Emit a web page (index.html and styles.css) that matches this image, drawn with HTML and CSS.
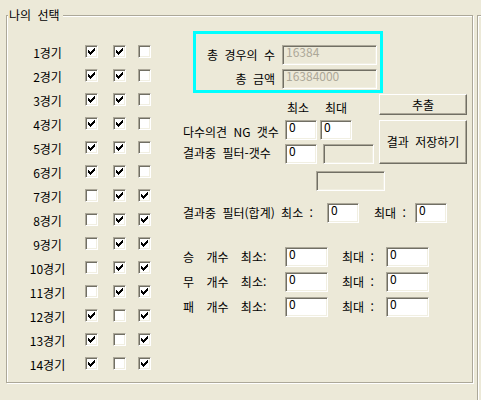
FILE: index.html
```html
<!DOCTYPE html>
<html lang="ko">
<head>
<meta charset="utf-8">
<title>나의 선택</title>
<link rel="stylesheet" href="styles.css">
</head>
<body>
<div class="page">
  <div class="group main">
    <span class="legend">나의 선택</span>
    <div class="games">
      <div class="row"><span class="lbl">1경기</span><span class="cb on"></span><span class="cb on"></span><span class="cb"></span></div>
      <div class="row"><span class="lbl">2경기</span><span class="cb on"></span><span class="cb on"></span><span class="cb"></span></div>
      <div class="row"><span class="lbl">3경기</span><span class="cb on"></span><span class="cb on"></span><span class="cb"></span></div>
      <div class="row"><span class="lbl">4경기</span><span class="cb on"></span><span class="cb on"></span><span class="cb"></span></div>
      <div class="row"><span class="lbl">5경기</span><span class="cb on"></span><span class="cb on"></span><span class="cb"></span></div>
      <div class="row"><span class="lbl">6경기</span><span class="cb on"></span><span class="cb on"></span><span class="cb"></span></div>
      <div class="row"><span class="lbl">7경기</span><span class="cb"></span><span class="cb on"></span><span class="cb on"></span></div>
      <div class="row"><span class="lbl">8경기</span><span class="cb"></span><span class="cb on"></span><span class="cb on"></span></div>
      <div class="row"><span class="lbl">9경기</span><span class="cb"></span><span class="cb on"></span><span class="cb on"></span></div>
      <div class="row"><span class="lbl">10경기</span><span class="cb"></span><span class="cb on"></span><span class="cb on"></span></div>
      <div class="row"><span class="lbl">11경기</span><span class="cb"></span><span class="cb on"></span><span class="cb on"></span></div>
      <div class="row"><span class="lbl">12경기</span><span class="cb on"></span><span class="cb"></span><span class="cb on"></span></div>
      <div class="row"><span class="lbl">13경기</span><span class="cb on"></span><span class="cb"></span><span class="cb on"></span></div>
      <div class="row"><span class="lbl">14경기</span><span class="cb on"></span><span class="cb"></span><span class="cb on"></span></div>
    </div>
    <div class="panel">
      <div class="cyan">
        <span class="clabel">총 경우의 수</span><div class="box dis">16384</div>
        <span class="clabel">총 금액</span><div class="box dis">16384000</div>
      </div>
      <div class="mid">
        <div class="hdr"><span class="h1">최소</span><span>최대</span></div>
        <div class="btn b1">추출</div>
        <span class="la">다수의견 NG 갯수</span>
        <div class="ia"><div class="box w32">0</div><div class="box w32">0</div></div>
        <div class="btn b2">결과 저장하기</div>
        <span class="lb">결과중 필터-갯수</span>
        <div class="ib"><div class="box w32">0</div><div class="box dis w51"></div></div>
        <div class="rc"><div class="box dis w69"></div></div>
      </div>
      <div class="sum">
        <span class="s1">결과중 필터(합계) 최소 :</span><div class="box w32">0</div>
        <span class="s2">최대 :</span><div class="box w32">0</div>
      </div>
      <div class="wdl">
        <div class="wrow"><span class="r1">승 개수 최소:</span><div class="box w43">0</div><span class="r2">최대 :</span><div class="box w43">0</div></div>
        <div class="wrow"><span class="r1">무 개수 최소:</span><div class="box w43">0</div><span class="r2">최대 :</span><div class="box w43">0</div></div>
        <div class="wrow"><span class="r1">패 개수 최소:</span><div class="box w43">0</div><span class="r2">최대 :</span><div class="box w43">0</div></div>
      </div>
    </div>
  </div>
  <div class="group side"></div>
</div>
</body>
</html>
```
FILE: styles.css
```css
html, body {
  margin: 0;
  padding: 0;
}
body {
  background: #ECE9D8;
  font-family: "Noto Sans CJK KR", "Noto Sans", sans-serif;
  font-size: 12px;
  line-height: 14px;
  color: #000;
  width: 481px;
  height: 400px;
  overflow: hidden;
  word-spacing: 3px;
}
.page {
  display: flex;
  align-items: flex-start;
  padding: 15px 0 0 6px;
}
.group {
  box-sizing: border-box;
  border: 1px solid #ACA899;
  box-shadow: inset 1px 1px 0 #fff, 1px 1px 0 #fff;
  flex: none;
}
.main {
  position: relative;
  width: 467px;
  height: 368px;
  display: flex;
  align-items: flex-start;
}
.side {
  margin-left: 4px;
  width: 4px;
  height: 385px;
  border-right: none;
  border-bottom: none;
  box-shadow: inset 1px 1px 0 #fff;
}
.legend {
  position: absolute;
  left: 1px;
  top: -8px;
  padding: 0 3px 0 1px;
  background: #ECE9D8;
  white-space: nowrap;
}

/* game rows */
.games {
  flex: none;
  width: 176px;
  padding-top: 23px;
  box-sizing: border-box;
}
.row {
  display: flex;
  align-items: center;
  height: 24px;
}
.lbl {
  width: 41px;
  margin-left: 20px;
  padding-top: 3px;
  text-align: center;
  white-space: nowrap;
  word-spacing: 0;
}
.cb {
  position: relative;
  flex: none;
  box-sizing: border-box;
  width: 13px;
  height: 13px;
  border: 1px solid;
  border-color: #ACA899 #fff #fff #ACA899;
  box-shadow: inset 1px 1px 0 #716F64, inset -1px -1px 0 #F1EFE2;
  background: #fff;
}
.row .cb:nth-child(2) { margin-left: 17px; }
.row .cb:nth-child(3) { margin-left: 15px; }
.row .cb:nth-child(4) { margin-left: 12px; }
.cb.on::after {
  content: "";
  position: absolute;
  left: 2px;
  top: 4px;
  width: 1px;
  height: 3px;
  background: #000;
  box-shadow: 1px 1px 0 #000, 2px 2px 0 #000, 3px 1px 0 #000,
              4px 0 0 #000, 5px -1px 0 #000, 6px -2px 0 #000;
}

/* edit boxes */
.box {
  box-sizing: border-box;
  flex: none;
  height: 20px;
  border: 1px solid;
  border-color: #ACA899 #fff #fff #ACA899;
  box-shadow: inset 1px 1px 0 #716F64, inset -1px -1px 0 #F1EFE2;
  background: #fff;
  padding: 0 0 0 3px;
  line-height: 12px;
  white-space: nowrap;
  word-spacing: 0;
}
.box.dis {
  background: #ECE9D8;
  color: #ACA899;
}
.w32 { width: 32px; }
.w43 { width: 43px; }
.w51 { width: 51px; }
.w69 { width: 69px; }

/* right panel */
.panel {
  flex: none;
  width: 285px;
}
.cyan {
  box-sizing: border-box;
  margin: 15px 0 0 10px;
  width: 190px;
  height: 62px;
  border: 3px solid #00FFFF;
  padding: 11px 3px 0 0;
  display: grid;
  grid-template-columns: 1fr 95px;
  grid-template-rows: 20px 20px;
  column-gap: 7px;
  row-gap: 4px;
}
.clabel {
  text-align: right;
  align-self: center;
  white-space: nowrap;
}
.mid {
  margin-top: 1px;
  display: grid;
  grid-template-columns: 102px 94px 88px;
  grid-template-rows: 26px 20px 4px 20px 7px 20px;
}
.hdr {
  grid-column: 2;
  grid-row: 1;
  display: flex;
  padding-top: 7px;
}
.hdr .h1 {
  margin-left: 2px;
  width: 38px;
}
.btn {
  grid-column: 3;
  box-sizing: border-box;
  border: 1px solid;
  border-color: #fff #716F64 #716F64 #fff;
  box-shadow: inset -1px -1px 0 #ACA899;
  background: #ECE9D8;
  display: flex;
  align-items: center;
  justify-content: center;
  white-space: nowrap;
}
.b1 {
  grid-row: 1;
  height: 21px;
  align-self: start;
}
.b2 {
  grid-row: 2 / 5;
}
.la {
  grid-column: 1;
  grid-row: 2 / 4;
  padding-top: 5px;
  white-space: nowrap;
}
.ia {
  grid-column: 2;
  grid-row: 2;
  display: flex;
  gap: 3px;
}
.lb {
  grid-column: 1;
  grid-row: 4;
  padding-top: 2px;
  white-space: nowrap;
}
.ib {
  grid-column: 2;
  grid-row: 4;
  display: flex;
  gap: 6px;
}
.rc {
  grid-column: 1 / 4;
  grid-row: 6;
  padding-left: 133px;
}
.sum {
  margin-top: 12px;
  display: flex;
  align-items: center;
  height: 20px;
}
.s1 {
  width: 144px;
  white-space: nowrap;
}
.s2 {
  margin-left: 15px;
  width: 41px;
  white-space: nowrap;
}
.wdl {
  margin-top: 24px;
  display: flex;
  flex-direction: column;
  gap: 5px;
}
.wrow {
  display: flex;
  align-items: center;
  height: 20px;
}
.r1 {
  width: 102px;
  word-spacing: 9px;
  white-space: nowrap;
}
.r2 {
  margin-left: 14px;
  width: 44px;
  white-space: nowrap;
}
```
